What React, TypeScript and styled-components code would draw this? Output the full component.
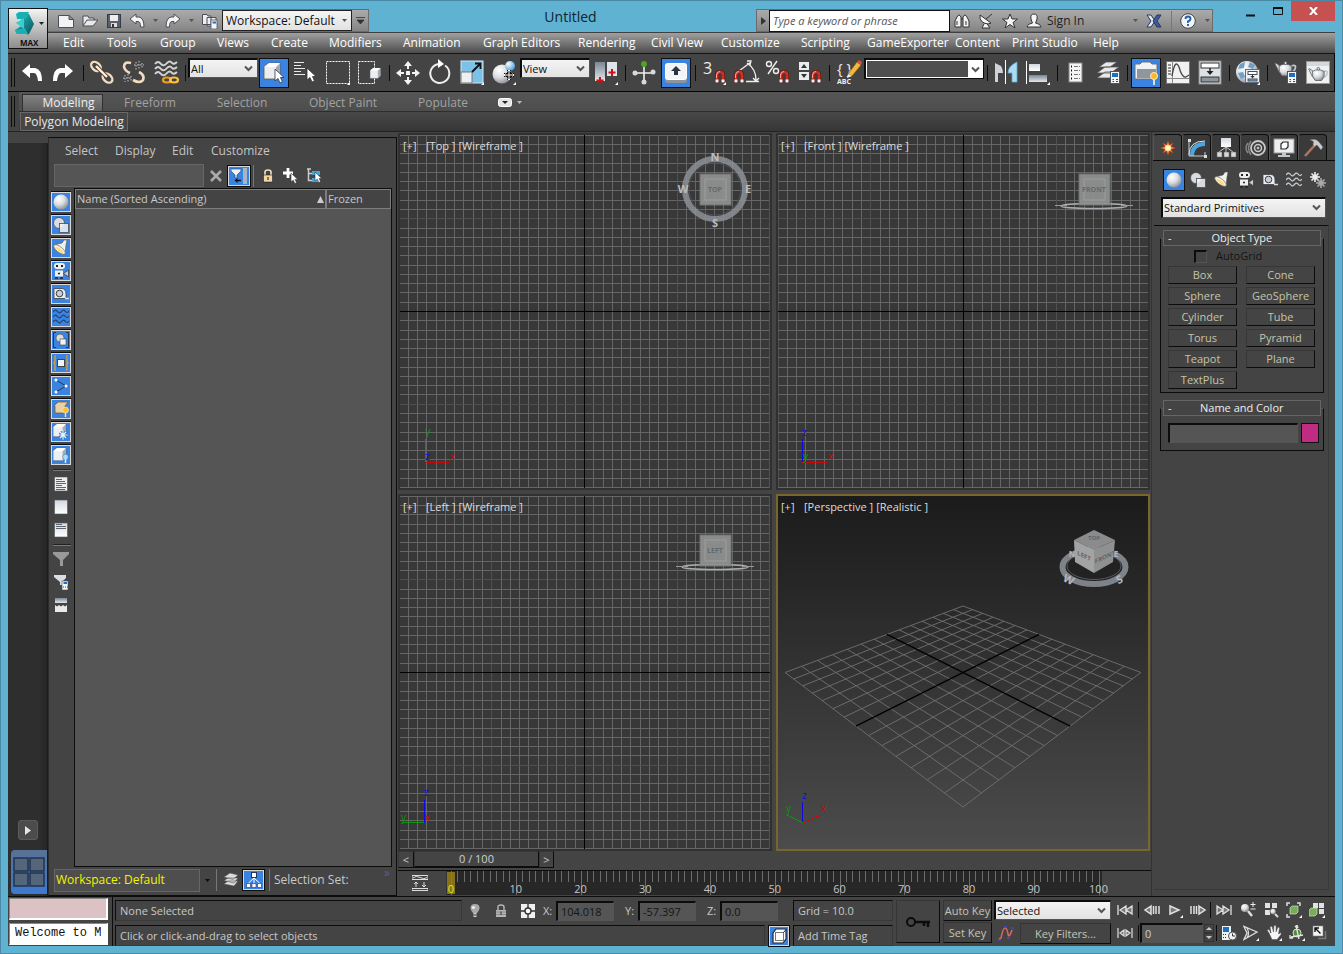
import React, { useState } from 'react';
import styled, { createGlobalStyle, css } from 'styled-components';

const GlobalStyle = createGlobalStyle`
    * { box-sizing:border-box; }
    html, body { margin:0; padding:0; }
    body {
        background:#5fb2d1;
        font-family:"Open Sans","Noto Sans",sans-serif;
        font-size:11px;
        line-height:16px;
        color:#c8c8c8;
    }
    button, input, select { font:inherit; color:inherit; margin:0; border-radius:0; }
    button { padding:0; border:0; background:none; cursor:default; }
    svg { display:block; flex:none; }
`

/* ---------- shared parts ---------- */
const sunken = css`
    border:1px solid #555;
    border-top-color:#0c0c0c;
    border-left-color:#0c0c0c;
`
const raised = css`
    border:1px solid #363636;
    border-right-color:#0c0c0c;
    border-bottom-color:#0c0c0c;
`
const Window = styled.div`
    min-height:100vh;
    display:flex;
    flex-direction:column;
    padding:0 7px 7px;
    background:#5fb2d1;
    border:1px solid #4a8aa4;
`
const Spacer = styled.div<{ $w?: number }>`
    ${p => p.$w ? `width:${p.$w}px; flex:none;` : 'flex:1;'}
`
const VLine = styled.span<{ $w?: number; $h?: number; $light?: boolean }>`
    flex:none;
    width:${p => p.$w || 6}px;
    height:${p => p.$h || 16}px;
    background:linear-gradient(${p => p.$light ? '#777,#777' : '#0c0c0c,#0c0c0c'}) center / 1px 100% no-repeat;
`
const IconButton = styled.button<{ $w?: number; $h?: number }>`
    flex:none;
    width:${p => p.$w || 24}px;
    height:${p => p.$h || 20}px;
    display:flex;
    align-items:center;
    justify-content:center;
`
const DropWrap = styled.div<{ $w?: number; $h?: number }>`
    flex:none;
    display:grid;
    align-items:center;
    ${p => p.$w ? `width:${p.$w}px;` : ''}
    height:${p => p.$h || 20}px;
    > * { grid-area:1/1; }
    > svg { justify-self:end; margin-right:5px; pointer-events:none; }
`
const DropSelect = styled.select`
    appearance:none;
    width:100%;
    height:100%;
    padding:0 18px 0 1px;
    border:1px solid #555;
    border-top:2px solid #0c0c0c;
    border-left:2px solid #0c0c0c;
    background:linear-gradient(#f4f4f4,#e2e2e2);
    color:#111;
    font-size:11px;
`
const Chevron = () => (
    <svg width="9" height="7" viewBox="0 0 9 7"><path d="M1 1.5 L4.5 5 L8 1.5" fill="none" stroke="#555" strokeWidth="2" /></svg>
)
const Drop = ({ label, value, w, h }: { label: string; value: string; w?: number; h?: number }) => (
    <DropWrap $w={w} $h={h}>
        <DropSelect aria-label={label} defaultValue={value}><option>{value}</option></DropSelect>
        <Chevron />
    </DropWrap>
)
const Caret = ({ color = '#555' }: { color?: string }) => (
    <svg width="5" height="3" viewBox="0 0 5 3"><path d="M0 0 H5 L2.5 3 Z" fill={color} /></svg>
)

/* ---------- drawings ---------- */
const Defs = () => (
    <svg width="0" height="0" style={{ position: 'absolute' }} aria-hidden="true">
        <defs>
            <radialGradient id="ball" cx=".35" cy=".3" r=".75"><stop offset="0" stopColor="#fff" /><stop offset=".5" stopColor="#dcdfe2" /><stop offset="1" stopColor="#8b9096" /></radialGradient>
            <radialGradient id="blueBall" cx=".35" cy=".3" r=".75"><stop offset="0" stopColor="#fff" /><stop offset="1" stopColor="#3d9bdc" /></radialGradient>
            <linearGradient id="metal" x2="0" y2="1"><stop offset="0" stopColor="#d3d8de" /><stop offset="1" stopColor="#fff" /></linearGradient>
            <linearGradient id="steel" x2="0" y2="1"><stop offset="0" stopColor="#7b8794" /><stop offset="1" stopColor="#e3e7ec" /></linearGradient>
            <linearGradient id="teal" x2="1" y2="1"><stop offset="0" stopColor="#2bc4c4" /><stop offset="1" stopColor="#07515b" /></linearGradient>
        </defs>
    </svg>
)
const waves32 = [7, 12, 17].map(y => `M5 ${y} q3 -4 6 0 q3 3 6 -1 q3 -3 5 0 q2 2 5 -1`).join(' ')
const waves16 = [3, 8, 13].map(y => `M0 ${y} q2 -3 4 -1 q2 3 4 1 q2 -3 4 -1 q2 3 4 0`).join(' ')
const cursor = (x: number, y: number, s = 1) => (
    <path transform={`translate(${x} ${y}) scale(${s})`} d="M0 0 V12 L3 9.5 L5 14 L7.5 13 L5.500 8.500 H9 Z" fill="#fff" stroke="#333" strokeWidth=".8" />
)
const magnet = (x: number, y: number) => (
    <g transform={`translate(${x} ${y})`}>
        <path d="M2 13 V5.500 Q2 2 5 2 Q8 2 8 5.500 V13" fill="none" stroke="#3a1512" strokeWidth="4.200" />
        <path d="M2 12 V5.500 Q2 2 5 2 Q8 2 8 5.500 V12" fill="none" stroke="#cf2f22" strokeWidth="3" />
        <path d="M2 12.500 V9.500 M8 12.500 V9.500" stroke="#f2f2f2" strokeWidth="3" />
        <path d="M1.500 8 V5 Q2 1.500 5 1.500" fill="none" stroke="#f3a89e" strokeWidth="1" />
    </g>
)
const corner = <path d="M28 25 V28 H25 Z" fill="#fff" />
const cube = (x: number, y: number, s: number) => (
    <g transform={`translate(${x} ${y}) scale(${s})`}>
        <path d="M0 4 L5 0 H16 V12 L12 16 H0 Z" fill="#eceef0" stroke="#555b63" strokeWidth=".8" />
        <path d="M12 16 V4 L16 0 V12 Z" fill="#a5abb3" />
        <path d="M0 4 L5 0 H16 L12 4 Z" fill="#fff" />
    </g>
)
const panelBadge = (x: number, y: number) => (
    <g transform={`translate(${x} ${y})`}>
        <rect x=".5" y=".5" width="9" height="12" fill="#f3f5f7" stroke="#4a5664" />
        <rect x="2" y="2" width="6" height="4" fill="#1f6fc0" />
        <path d="M2.500 8.500 H4 M2.500 10.500 H4 M6 8.500 H8 M6 10.500 H8" stroke="#3c4a58" />
    </g>
)
const teapot = (x: number, y: number, s = 1) => (
    <g transform={`translate(${x} ${y}) scale(${s})`} stroke="#4b5158" strokeWidth=".8">
        <path d="M6 5 Q0 0 1 3 L5 11 L8 12" fill="#d8dbde" />
        <path d="M17 5 Q23 3 21 8 Q20 11 16 12" fill="none" stroke="#c2c6ca" strokeWidth="1.800" />
        <path d="M5 5 Q11 1 18 5 Q19 11 15 15 H8 Q4 11 5 5 Z" fill="url(#ball)" />
        <circle cx="11.500" cy="2" r="1.500" fill="#ddd" />
    </g>
)

// 32px main toolbar drawings
const big: Record<string, React.ReactNode> = {
    undo: <path d="M6 14 L14 7 V11 H19 Q26 12 26 24 H22 Q21 16 18 16 H14 V21 Z" fill="#fff" />,
    redo: <path d="M25 14 L17 7 V11 H12 Q5 12 5 24 H9 Q10 16 13 16 H17 V21 Z" fill="#fff" />,
    link: <g fill="none" stroke="#f3dcc0" strokeWidth="2.400">
        <ellipse cx="10" cy="9.500" rx="5.500" ry="3.800" transform="rotate(42 10 9.500)" />
        <ellipse cx="21.500" cy="21" rx="5.500" ry="3.800" transform="rotate(42 21.500 21)" />
        <path d="M10 9 L21 20" stroke="#4b3a2a" strokeWidth="4" /><path d="M10 9 L21 20" stroke="#fff2e0" />
    </g>,
    unlink: <g fill="none" stroke="#f3dcc0" strokeWidth="2.600">
        <path d="M13 6 Q6 4 6 10 Q7 14 12 16" /><path d="M21 15 Q27 18 25 23 Q22 27 15 23" />
        <path d="M18 5 V13 M21 4 V13 M24 6 V12 M16 8 H26 M7 18 V25 M10 17 V26 M13 19 V25 M5 21 H14" stroke="#999" strokeWidth="1.500" strokeDasharray="1.500 1.500" />
    </g>,
    bind: <g fill="none">
        <path d={waves32} stroke="#d4d4d4" strokeWidth="1.800" />
        <ellipse cx="17" cy="23" rx="4" ry="2.500" stroke="#ef9f1c" strokeWidth="2.200" /><ellipse cx="24" cy="23" rx="4" ry="2.500" stroke="#ffc23a" strokeWidth="2.200" />
    </g>,
    select: <>{cube(6, 6, 1)}{cursor(17, 12, 1)}</>,
    byName: <><path d="M4 5.500 H14 M4 8.500 H11 M4 11.500 H15 M4 14.500 H11 M4 17.500 H15" stroke="#e8e8e8" />{cursor(17, 11)}</>,
    rect: <><rect x="4.500" y="4.500" width="23" height="22" fill="none" stroke="#fff" strokeDasharray="2 1" />{corner}</>,
    windowSel: <><rect x="4.500" y="4.500" width="16" height="22" fill="none" stroke="#fff" strokeDasharray="2 1" />{cube(16, 11, .65)}</>,
    move: <g fill="#f4f4f4"><path d="M16 4 L20 9 H12 Z M16 28 L20 23 H12 Z M4 16 L9 12 V20 Z M28 16 L23 12 V20 Z" /><path d="M15 8 h2 v4 h-2 z M15 20 h2 v4 h-2 z M8 15 h4 v2 h-4 z M20 15 h4 v2 h-4 z" /><rect x="14" y="14" width="4" height="4" /></g>,
    rotate: <><path d="M15 7 A9.500 9.500 0 1 0 21 8.500" fill="none" stroke="#eee" strokeWidth="2" /><path d="M14 2 L20 7 L14 11 Z" fill="#fff" /></>,
    scale: <><rect x="5" y="4" width="22" height="22" fill="#7cc1e6" stroke="#cfeaf7" /><rect x="5" y="15" width="11" height="11" fill="#eef1f3" stroke="#777" /><path d="M16 15 L24 7 M19 6.500 H24.500 V12" stroke="#111" strokeWidth="1.800" fill="none" />{corner}</>,
    place: <><circle cx="14" cy="17" r="9.500" fill="url(#ball)" /><circle cx="22" cy="9" r="5" fill="url(#blueBall)" /><path d="M21 13 V23 M16 18 H26" stroke="#111" strokeWidth="4" /><path d="M21 13 V23 M16 18 H26 M19.500 14.500 L21 13 L22.500 14.500 M19.500 21.500 L21 23 L22.500 21.500 M17.500 16.500 L16 18 L17.500 19.500 M24.500 16.500 L26 18 L24.500 19.500" stroke="#fff" fill="none" />{corner}</>,
    pivot: <><rect x="5" y="5" width="10" height="19" fill="url(#steel)" /><rect x="17" y="5" width="10" height="14" fill="#dfe3ea" /><path d="M10 20 V27 M6.500 23.500 H13.500 M22 12 V19 M18.500 15.500 H25.500" stroke="#d01010" strokeWidth="2" />{corner}</>,
    manip: <><path d="M16 8 V24 M6 16 H26" stroke="#eee" strokeWidth="1.600" /><circle cx="16" cy="7" r="3" fill="#4fa31f" /><circle cx="16" cy="25" r="2.500" fill="#d6dae0" /><circle cx="7" cy="16" r="2.500" fill="#d6dae0" /><circle cx="25" cy="15" r="2.500" fill="#d6dae0" /></>,
    keyboard: <><rect x="5" y="6" width="22" height="20" rx="3" fill="#8c949c" /><rect x="5.500" y="6.500" width="21" height="16" rx="2" fill="#f3f4f6" stroke="#fff" /><path d="M16 9 L21 14 H18 V18 H14 V14 H11 Z" fill="#2b3440" /></>,
    snap3: <><text x="5" y="17" fontSize="16" fill="#eee">3</text>{magnet(17, 13)}{corner}</>,
    snapAngle: <><path d="M9 14 L21 5 M17 6 Q26 12 26 23 M16 24.500 H29 M17 4 L21 4 L20 8 M23 21 L26 24 L29 21" stroke="#eee" strokeWidth="1.300" fill="none" />{magnet(4, 13)}</>,
    snapPct: <><circle cx="7" cy="7" r="2.500" fill="none" stroke="#eee" strokeWidth="1.400" /><circle cx="14" cy="14" r="2.500" fill="none" stroke="#eee" strokeWidth="1.400" /><path d="M15 4 L6 17" stroke="#eee" strokeWidth="1.400" />{magnet(17, 13)}</>,
    snapSpin: <><rect x="5" y="5" width="10" height="8" fill="#e9ecef" /><rect x="5" y="15" width="10" height="8" fill="#e9ecef" /><path d="M7 11 L10 7 L13 11 Z M7 17 L10 21 L13 17 Z" fill="#333" />{magnet(17, 13)}</>,
    named: <><text x="5" y="17" fontSize="15" fill="#eee">{'{ }'}</text><path d="M16 17 L25 5 L29 8 L20 19 Z" fill="#f5b93a" stroke="#7a5712" strokeWidth=".6" /><path d="M25 5 L29 8 L30 5 L27 3 Z" fill="#d8503c" /><path d="M16 17 L20 19 L15 21 Z" fill="#eee" /><text x="5" y="27" fontSize="7" fontWeight="700" fill="#eee">ABC</text></>,
    mirror: <><path d="M5 6 L11 9 Q13 12 13 16 H8 V25 H5 Z" fill="#cfd3d9" /><path d="M15.500 3 V27" stroke="#fff" /><path d="M27 5 V25 H22 V16 H18 Q18 9 27 5 Z" fill="#aadcf2" stroke="#5fa9cc" strokeWidth=".8" /></>,
    align: <><path d="M4.500 4 V27" stroke="#fff" /><rect x="7" y="7" width="11" height="7" fill="url(#metal)" /><rect x="7" y="18" width="18" height="7" fill="url(#steel)" />{corner}</>,
    layerDoc: <><rect x="9" y="6" width="13" height="19" fill="#f4f4f4" stroke="#888" /><path d="M14 9.500 H20 M14 13.500 H20 M14 17.500 H20 M14 21.500 H20" stroke="#777" strokeDasharray="4 1" /><path d="M11 9.500 h1 M11 13.500 h1 M11 17.500 h1 M11 21.500 h1" stroke="#111" strokeWidth="2" /></>,
    layers: <><path d="M5 21 L13 15 H27 L19 21 Z M5 16 L13 10 H27 L19 16 Z M7 10 L14 5 H25 L18 10 Z" fill="#e6e8ea" stroke="#555" strokeWidth=".8" />{panelBadge(18, 14)}</>,
    ribbon: <><path d="M5 7 H10 L12 5 H20 L22 7 H27 V22 H5 Z" fill="#f2f3f5" stroke="#6b7077" /><rect x="7" y="12" width="19" height="9" fill="#8f969e" /><circle cx="24" cy="19" r="3.500" fill="#ffb728" stroke="#fff2b0" /><path d="M24 23 V28" stroke="#ddd" strokeWidth="2" /></>,
    curve: <><rect x="4.500" y="4.500" width="23" height="22" fill="#f1f1f1" stroke="#777" /><path d="M10.500 4 V26 M5 21.500 H27" stroke="#888" /><path d="M6 8 H9 M6 11 H9 M6 14 H9 M6 17 H9" stroke="#333" /><path d="M10 19 Q13 1 17 10 Q20 21 24 20 L27 18" fill="none" stroke="#444" strokeWidth="1.300" /></>,
    schematic: <><rect x="5" y="4" width="22" height="23" fill="#dfe2e5" stroke="#888" /><rect x="7" y="6" width="18" height="5" fill="#fff" stroke="#333" /><rect x="7" y="20" width="18" height="5" fill="#8c949c" stroke="#333" /><path d="M16 11 V15" stroke="#222" strokeWidth="1.500" /><path d="M12.500 14 H19.500 L16 18 Z" fill="#222" /></>,
    material: <><circle cx="15" cy="15" r="11" fill="url(#ball)" /><path d="M8 7 L13 5 L12 11 L6 12 Z M18 5 L23 8 L21 12 L16 10 Z M6 16 L11 15 L13 20 L9 22 Z M24 13 L26 16 L22 17 Z" fill="#6d9fc8" /><rect x="13.500" y="12.500" width="14" height="13" fill="#eef1f4" stroke="#5a6e84" /><rect x="16" y="14.500" width="9" height="3" fill="#fff" stroke="#44525f" /><rect x="16" y="22" width="9" height="2" fill="#8fa3b8" stroke="#44525f" /><path d="M20.500 17 V20" stroke="#333" /><path d="M18.500 19 H22.500 L20.500 21.500 Z" fill="#333" />{corner}</>,
    renderSetup: <>{teapot(4, 4, 1)}{panelBadge(17, 14)}</>,
    frame: <><rect x="4.500" y="4.500" width="23" height="22" fill="#f0f1f1" stroke="#999" /><rect x="5" y="5" width="22" height="4" fill="#d5d8da" />{teapot(6, 10, .9)}</>,
}

// 16px drawings, shared by the explorer filters and the create panel
const small: Record<string, React.ReactNode> = {
    sphere: <circle cx="8" cy="8" r="7.500" fill="url(#ball)" />,
    shapes: <><circle cx="6" cy="6" r="5.500" fill="#d9dde1" stroke="#484d53" strokeWidth=".8" /><rect x="6.500" y="6.500" width="9" height="9" fill="#f2f3f4" fillOpacity=".85" stroke="#484d53" strokeWidth=".8" /></>,
    light: <><path d="M9 3 L11 0 L14 0 L13 5 L12 14 L1 5 Z" fill="#f0f0ec" stroke="#555" strokeWidth=".6" /><ellipse cx="6.500" cy="9.500" rx="7" ry="2.800" transform="rotate(38 6.500 9.500)" fill="#f6f1dc" stroke="#666" strokeWidth=".6" /><ellipse cx="6.500" cy="10" rx="4.500" ry="1.300" transform="rotate(38 6.500 10)" fill="#ffdc6a" /></>,
    camera: <><rect x="1" y="0" width="11" height="6" rx="3" fill="#eceef0" /><path d="M3 3 H5 M8 3 H10" stroke="#222" strokeWidth="2" /><rect x="2" y="7.500" width="8" height="6" fill="#eceef0" /><path d="M10.500 10.500 L15.500 7 V14 Z" fill="#c5c9ce" stroke="#333" strokeWidth=".7" /><path d="M5 10.500 H7 M2 15 H5 M7 15 H10" stroke="#222" strokeWidth="1.400" /></>,
    tape: <><path d="M1 2.500 H9 Q13 3 13 8 V12.500 H1 Z" fill="#e9ebee" stroke="#3c4147" strokeWidth=".8" /><circle cx="6.500" cy="7.500" r="3.300" fill="#c9ced4" stroke="#3c4147" /><path d="M12 12.500 H16" stroke="#ddd" strokeWidth="1.500" /></>,
    wavesDark: <path d={waves16} fill="none" stroke="#24426e" strokeWidth="1.200" />,
    wavesLight: <path d={waves16} fill="none" stroke="#c4cacf" strokeWidth="1.300" />,
    group: <><path d="M3 .5 H.5 V15.500 H3 M13 .5 H15.500 V15.500 H13" fill="none" stroke="#26364d" /><circle cx="7" cy="6" r="4" fill="#d9dde1" stroke="#444" strokeWidth=".6" /><rect x="7" y="7" width="6" height="6" fill="#f2f3f4" stroke="#444" strokeWidth=".6" /></>,
    xref: <><path d="M3 1 H2 V7 L1 8 L2 9 V15 H3 M13 1 H14 V7 L15 8 L14 9 V15 H13" fill="none" stroke="#f0a21e" strokeWidth="1.200" /><rect x="4.500" y="4.500" width="7" height="7" fill="#f2f3f4" stroke="#444" /></>,
    bone: <><path d="M3 2 L13 8 L3 14" fill="none" stroke="#26364d" /><circle cx="3" cy="2" r="1.500" fill="#fff" /><circle cx="13" cy="8" r="1.500" fill="#fff" /><circle cx="3" cy="14" r="1.500" fill="#fff" /></>,
    container: <><path d="M1 5 L5 1 H15 L12 5 V12 H2 V5 Z" fill="#e9cfa4" stroke="#7a5c33" strokeWidth=".8" /><circle cx="12.500" cy="9" r="3" fill="#ffbe2e" stroke="#fff3bb" strokeWidth=".6" /><path d="M12.500 12 V16" stroke="#ddd" strokeWidth="1.500" /></>,
    frozen: <>{cube(0, 0, .8)}<circle cx="10" cy="11" r="4" fill="#2f6db8" /><path d="M10 6.500 V15.500 M5.500 11 H14.500 M7 8 L13 14 M13 8 L7 14" stroke="#e9f7ff" strokeWidth="1.200" /></>,
    hidden: <>{cube(0, 1, .8)}<circle cx="12.500" cy="10" r="2.800" fill="#a9dcfa" stroke="#3b83c0" strokeWidth=".6" /><path d="M12.500 12 V16" stroke="#eee" strokeWidth="1.500" /></>,
    docFull: <><rect x="1.500" y="1" width="13" height="14" fill="#eceeef" stroke="#4d535e" strokeWidth=".6" /><path d="M3 3.500 H9 M3 5.500 H12 M3 7.500 H13 M3 9.500 H9 M3 11.500 H13 M3 13.500 H12" stroke="#5f6570" /></>,
    docEmpty: <rect x="1.500" y="1" width="13" height="14" fill="url(#metal)" stroke="#4d535e" strokeWidth=".6" />,
    docHalf: <><rect x="1.500" y="1" width="13" height="14" fill="url(#metal)" stroke="#4d535e" strokeWidth=".6" /><path d="M3 2.500 H9 M3 4.500 H13 M3 6.500 H13" stroke="#5f6570" /></>,
    funnel: <path d="M0 1 H16 V3 L10 9 V15 H7 V9 L0 3 Z" fill="#999" />,
    funnelSet: <><path d="M1 1 H13 V4 L9 8 V11 H7 V8 L1 3 Z" fill="#d9dde1" /><rect x="9" y="7" width="6" height="9" fill="#f4f5f6" stroke="#4a5664" strokeWidth=".6" /><rect x="10.500" y="8" width="3.500" height="2" fill="#1f6fc0" /><path d="M10 13 H15" stroke="#444" strokeDasharray="1 1" /></>,
    torn: <><rect x="2" y="1" width="12" height="5" fill="url(#steel)" /><path d="M2 8 L4 9.500 L6 8 L8 9.500 L10 8 L12 9.500 L14 8 V15 H2 Z" fill="#e8eaec" /></>,
    system: <><path d="M5 0 V10 M0 5 H10 M1.500 1.500 L8.500 8.500 M8.500 1.500 L1.500 8.500" stroke="#eee" strokeWidth="1.600" /><circle cx="5" cy="5" r="2.500" fill="#eee" /><path d="M11 6 V16 M6 11 H16 M7.500 7.500 L14.500 14.500 M14.500 7.500 L7.500 14.500" stroke="#a9a9a9" strokeWidth="1.600" /><circle cx="11" cy="11" r="2.500" fill="#a9a9a9" /></>,
    bulb: <><path d="M8 1 Q13 1 12.500 5.500 Q12 8 10 10 H6 Q4 8 3.500 5.500 Q3 1 8 1 Z" fill="#a9a9a9" /><circle cx="6.500" cy="4.500" r="1.600" fill="#eee" /><path d="M6.500 10 H9.500 V14 H6.500 Z" fill="#d0d0d0" /><path d="M6.500 12 H9.500" stroke="#333" /></>,
    lockGrey: <><path d="M5 7 V4 Q5 2 8 2 Q11 2 11 4 V7" fill="none" stroke="#b9b9b9" strokeWidth="1.400" /><rect x="3" y="7" width="10" height="7" fill="#b4b4b4" /><path d="M3 9 H13 M3 11.500 H13" stroke="#8a8a8a" /><path d="M8 8.500 V12" stroke="#333" /></>,
    lockGold: <><path d="M5 7 V4 Q5 2 8 2 Q11 2 11 4 V7" fill="none" stroke="#f1dfc2" strokeWidth="1.600" /><rect x="3.500" y="7" width="9" height="7" fill="#f3d6a4" stroke="#111" strokeWidth=".5" /><path d="M8 9 V12" stroke="#111" /></>,
    absMode: <><rect x="1" y="1" width="14" height="14" fill="#eef1f3" /><circle cx="8" cy="8" r="3" fill="#fff" stroke="#333" strokeWidth="1.400" /><path d="M8 1 V5 M8 11 V15 M1 8 H5 M11 8 H15" stroke="#333" strokeWidth="1.400" /></>,
    isolate: <><path d="M2 5 L5 1 H15 V11 L12 15 H2 Z" fill="#fff" stroke="#223" strokeWidth="1.200" /><rect x="4.500" y="4.500" width="8" height="8" fill="#fff" stroke="#777" /><path d="M12.500 4.500 L15 1.500" stroke="#223" /></>,
    cross: <path d="M3 3 L13 13 M13 3 L3 13" stroke="#aaa" strokeWidth="2.600" />,
    filterOn: <><path d="M0 1 H10 V3 L6 7 V10 H4 V7 L0 3 Z" fill="#eef2f6" stroke="#26364d" strokeWidth=".6" /><rect x="12" y="0" width="4" height="16" fill="#a9b4c2" /><path d="M10 12.500 H6" stroke="#111" strokeWidth="1.500" /><path d="M6.500 10 L3.500 12.500 L6.500 15 Z" fill="#111" /></>,
    addSel: <><path d="M5 0 V10 M0 5 H10" stroke="#fff" strokeWidth="2.800" />{cursor(8, 5, .75)}</>,
    treeSel: <><path d="M1 1 H5 M2.500 1 V12.500 H7 M2.500 5.500 H7" stroke="#ccc" fill="none" strokeWidth="1.500" /><rect x="6" y="3" width="8" height="4" fill="#45a5d9" /><rect x="6" y="10" width="8" height="4" fill="#45a5d9" />{cursor(9, 4, .75)}</>,
    stack: <path d="M1 12 L5 9 H15 L11 14 Z M1 8.500 L5 6 H15 L11 11 Z M1 5 L7 1 L15 3 L10 7.500 Z" fill="#ddd" stroke="#555" strokeWidth=".6" />,
    tree: <><rect x="5.500" y=".5" width="5" height="5" fill="#fff" stroke="#26364d" /><path d="M8 6 V11 M8 6 L2.500 11 M8 6 L13.500 11" stroke="#fff" /><path d="M.5 11.500 h4 v4 h-4 z M6 11.500 h4 v4 h-4 z M11.500 11.500 h4 v4 h-4 z" fill="#fff" stroke="#26364d" strokeWidth=".6" /></>,
    newFile: <path d="M.5 2.500 H11 L15.500 6.500 V14.500 H.5 Z M11 2.500 V6.500 H15.500" fill="#f2f3f5" stroke="#4a4f58" />,
    openFile: <path d="M1 13 V3 H6 L7 5 H12 V7 M1 13 L5 7 H16 L11 13 Z" fill="#e9e9e9" stroke="#4a4f58" />,
    save: <><rect x="1.500" y="1.500" width="13" height="13" fill="#59606b" stroke="#333b46" /><rect x="4" y="2" width="8" height="6" fill="#eee" /><rect x="5" y="10" width="6" height="4" fill="#ddd" /><rect x="6" y="11" width="2" height="3" fill="#333" /></>,
    undoS: <path d="M1 6 L7 1 V4 H10 Q15 5 15 14 H11.500 Q11.500 8.500 9 8.500 H7 V11 Z" fill="#f4f4f4" stroke="#4a4f58" />,
    redoS: <path d="M15 6 L9 1 V4 H6 Q1 5 1 14 H4.500 Q4.500 8.500 7 8.500 H9 V11 Z" fill="#f4f4f4" stroke="#4a4f58" />,
    project: <><path d="M.5 11.500 V1.500 H5 L6 3 H9 V11.500 Z M5 4.500 H14 V13 H5 Z" fill="#eee" stroke="#4a4f58" /><rect x="9" y="7" width="6" height="9" fill="#f4f5f6" stroke="#4a5664" strokeWidth=".8" /><rect x="10.500" y="8.500" width="3.500" height="2" fill="#1f6fc0" /></>,
    binoc: <g fill="#f2f2f2" stroke="#333"><path d="M3 4 Q5 0 7 4 V14 H1 V8 Z M13 4 Q11 0 9 4 V14 H15 V8 Z" /><path d="M7 6 H9 M3 8 V12 M12 8 V12" /></g>,
    dish: <g fill="#f4f4f4" stroke="#333"><path d="M2 2 Q1 10 10 11 L13 10 Z" /><path d="M8 6 L14 1 M6 11 L4 15 H12 L9 11" /></g>,
    star: <path d="M8 1 L10 6 H15.500 L11 9.500 L13 15 L8 11.500 L3 15 L5 9.500 L.5 6 H6 Z" fill="#f6f6f6" stroke="#333" />,
    user: <path d="M8 1 Q12 1 11 6 Q10 9 9.500 10 Q15 11 15 14 H1 Q1 11 6.500 10 Q6 9 5 6 Q4 1 8 1 Z" fill="#f6f6f6" stroke="#333" />,
    exchange: <><path d="M1 2 H5 L9 8 L5 14 H1 L5 8 Z" fill="#e3eaf5" stroke="#27365c" /><path d="M15 2 H11 L7 8 L11 14 H15 L11 8 Z" fill="#3c5c9e" stroke="#27365c" /></>,
    help: <><circle cx="8" cy="8" r="7.300" fill="#f2f5f8" stroke="#444" /><path d="M5.500 6 Q5.500 3.500 8 3.500 Q10.500 3.500 10.500 6 Q10.500 7.500 8 8.500 V10 M8 11 V13" stroke="#2a5fa8" strokeWidth="1.900" fill="none" /></>,
    trackView: <><path d="M0 .5 H16 V4.500 H0 Z M0 13.500 H16 V15.500 H0 Z" fill="none" stroke="#ddd" /><path d="M1 3 Q4 0 8 2.500 T15 2.500" fill="none" stroke="#ddd" /><path d="M4 12 V7 M2 9 L4 7 L6 9 M12 7 V12 M10 10 L12 12 L14 10" fill="none" stroke="#ddd" /></>,
    toStart: <path d="M1 3 V13 M9 4 L3 8 L9 12 Z M15 4 L9 8 L15 12 Z" fill="#777" stroke="#e0e0e0" strokeWidth="1.300" />,
    prev: <path d="M7 4 L1 8 L7 12 Z M9.500 4 V12 M12 4 V12 M15 4 V12" fill="#777" stroke="#e0e0e0" strokeWidth="1.500" />,
    play: <><path d="M3 4 L12 8 L3 12 Z" fill="#777" stroke="#e0e0e0" strokeWidth="1.500" /><path d="M16 13 V16 H13 Z" fill="#fff" /></>,
    next: <path d="M9 4 L15 8 L9 12 Z M1 4 V12 M4 4 V12 M6.500 4 V12" fill="#777" stroke="#e0e0e0" strokeWidth="1.500" />,
    toEnd: <path d="M15 3 V13 M7 4 L13 8 L7 12 Z M1 4 L7 8 L1 12 Z" fill="#777" stroke="#e0e0e0" strokeWidth="1.300" />,
    keyMode: <path d="M1 3 V13 M15 3 V13 M7 5 L3 8 L7 11 Z M9 5 L13 8 L9 11 Z" fill="#777" stroke="#e0e0e0" strokeWidth="1.200" />,
    zoom: <><circle cx="5" cy="6" r="4" fill="url(#ball)" /><path d="M8 9 L12 14" stroke="#ddd" strokeWidth="2.500" /><path d="M13 0 V5 M10.500 2.500 H15.500 M10.500 7 H15.500" stroke="#eee" /></>,
    zoomAll: <><path d="M2 1 h5 v5 h-5 z M9 1 h5 v5 h-5 z M2 8 h5 v5 h-5 z" fill="#e0e3e6" /><circle cx="10" cy="9.500" r="3" fill="url(#ball)" stroke="#444" strokeWidth=".6" /><path d="M12 12 L15 15" stroke="#ddd" strokeWidth="2" /></>,
    extents: <><path d="M4 1 H1 V4 M11 1 H14 V4 M4 15 H1 V12" fill="none" stroke="#ddd" strokeWidth="1.500" /><path d="M4 6 L6 4 H12 V10 L10 12 H4 Z" fill="#78ad5b" stroke="#c9e5b5" strokeWidth=".7" /><path d="M16 13 V16 H13 Z" fill="#fff" /></>,
    extentsAll: <><path d="M4 1 h5 v5 h-5 z M10 1 h5 v5 h-5 z M10 7 h5 v5 h-5 z" fill="#e0e3e6" /><path d="M0 8 L2 6 H8 V12 L6 14 H0 Z" fill="#78ad5b" stroke="#c9e5b5" strokeWidth=".7" /><path d="M16 13 V16 H13 Z" fill="#fff" /></>,
    timeConf: <><rect x="1" y="1" width="9" height="14" fill="#eef1f3" /><rect x="2" y="2" width="6" height="5" fill="#1f6fc0" /><path d="M2 9.500 H5 M2 12.500 H5" stroke="#333" strokeDasharray="1 1" /><circle cx="11.500" cy="11" r="4" fill="#f4f4f4" stroke="#555" /><path d="M11.500 8.500 V11 H14" fill="none" stroke="#333" /></>,
    fov: <><path d="M14 7 L1 1.500 L4 8 L1 14.500 Z M4 3 Q7 8 4 13" fill="none" stroke="#ddd" strokeWidth="1.300" /><path d="M16 13 V16 H13 Z" fill="#fff" /></>,
    pan: <><path d="M3 8 L1 5 L3 4.500 L5 8 L4 1.500 L6 1.500 L7.500 7 L8 .5 H10 L10 7 L12 2 L13.500 3 L12.500 9 L15 7.500 L15 9.500 L11 14.500 H6 Z" fill="#f6f6f6" stroke="#555" strokeWidth=".5" /><path d="M16 13 V16 H13 Z" fill="#fff" /></>,
    orbit: <><circle cx="8" cy="8" r="4" fill="#4d8a37" stroke="#ddd" /><path d="M2 12 L14 10 M7 1 L10 14 M6 2 L8 0 L9 3 M1 10 L1 13 L4 13" fill="none" stroke="#e5e5e5" strokeWidth="1.300" /><path d="M16 13 V16 H13 Z" fill="#fff" /></>,
    maximize: <><rect x="1" y="1" width="10" height="10" fill="#f4f4f4" stroke="#888" strokeWidth=".6" /><path d="M3.500 3.500 L8.500 8.500 M3 7 V3 H7" fill="none" stroke="#111" strokeWidth="1.400" /><path d="M6 13.500 H13.500 V6" fill="none" stroke="#777" strokeWidth="1.500" /></>,
    curveKey: <><path d="M1 14 L3 13 Q5 3 7 3 Q9 3 10 9 Q11 14 14 5" fill="none" stroke="#d9695f" strokeWidth="1.500" /><path d="M0 15 h3 M6 2 h3 M13 3 h3 M9 13 h3" stroke="#3a4fd0" strokeWidth="1.500" /></>,
}

// 24px tab drawings of the command panel
const tabArt: Record<string, React.ReactNode> = {
    create: <><path d="M12 5 L13.500 9 L17 7 L15 10.500 L19 12 L15 13.500 L17 17 L13.500 15 L12 19 L10.500 15 L7 17 L9 13.500 L5 12 L9 10.500 L7 7 L10.500 9 Z" fill="#ffa437" stroke="#b5432a" strokeWidth=".8" /><circle cx="12" cy="12" r="2.800" fill="#fff7cf" /></>,
    modify: <><path d="M4 19 Q4 5 20 5" fill="none" stroke="#d6e9f8" strokeWidth="1" /><path d="M7 20 Q7 8 20 8" fill="none" stroke="#4ea4dd" strokeWidth="4" /><path d="M4 4 V20 H20 V16 M4 4 h2" fill="none" stroke="#ccc" /><path d="M3 3 h3 v3 h-3 z M19 19 h3 v3 h-3 z" fill="#ddd" /></>,
    hierarchy: <><rect x="7" y="2" width="10" height="9" fill="url(#metal)" /><path d="M12 11 V16 M12 11 L5 16 M12 11 L19 16" stroke="#ccc" /><path d="M3 16 h5 v5 h-5 z M10 16 h5 v5 h-5 z M17 16 h5 v5 h-5 z" fill="#d8d8d8" stroke="#666" strokeWidth=".5" /></>,
    motion: <g fill="none" stroke="#c9c9c9"><circle cx="15" cy="12" r="7" strokeWidth="1.800" /><circle cx="15" cy="12" r="3.500" strokeWidth="1.600" /><circle cx="15" cy="12" r="1" fill="#ccc" /><path d="M8 5 Q3 12 8 19 M5 7 Q1 12 5 17" stroke="#888" strokeWidth="1.400" /></g>,
    display: <><rect x="2" y="3" width="20" height="14" fill="#eceef0" stroke="#999" /><path d="M9 8 L11 6 H16 V11 L14 13 H9 Z" fill="#fff" stroke="#222" strokeWidth="1.200" /><path d="M10 17 H14 V19 H18 V21 H6 V19 H10 Z" fill="#c3c6c9" /></>,
    utils: <><path d="M4 20 L14 9" stroke="#b8735c" strokeWidth="2.500" /><path d="M9 4 Q15 2 18 6 L22 11 L20 14 L16 9 L13 11 L12 8 Q14 5 9 4 Z" fill="#c9ccd0" stroke="#666" strokeWidth=".5" /></>,
}
const Big = ({ name }: { name: string }) => <svg width="32" height="32" viewBox="0 0 32 32" aria-hidden="true">{big[name]}</svg>
const Small = ({ name }: { name: string }) => <svg width="16" height="16" viewBox="0 0 16 16" aria-hidden="true">{small[name]}</svg>

/* ---------- title bar + menu ---------- */
const Header = styled.header`
    display:grid;
    grid-template-columns:40px 1fr;
    grid-template-rows:31px 21px;
`
const AppButton = styled.button`
    grid-area:1/1/3/2;
    z-index:1;
    align-self:start;
    margin-top:7px;
    height:41px;
    display:grid;
    grid-template-columns:30px 1fr;
    grid-template-rows:29px 10px;
    align-items:center;
    background:linear-gradient(#f4f4f4,#8d8d8d);
    border:1px solid #111;
    color:#111;
    font-size:8px;
    font-weight:700;
    line-height:10px;
    text-align:left;
    > span { grid-column:1/3; padding-left:11px; }
`
const TitleRow = styled.div`
    grid-area:1/2;
    display:flex;
    min-width:0;
`
const QuickBar = styled.div`
    height:23px;
    margin-top:8px;
    display:flex;
    align-items:center;
    padding-left:6px;
    background:linear-gradient(#ababab,#858585);
    border:1px solid #6b6b6b;
    border-left:0;
    color:#222;
    font-size:12px;
`
const WorkspaceSelect = styled(DropSelect)`
    border:1px solid #222;
    padding:0 10px 0 3px;
    font-size:12px;
`
const QuickEnd = styled.button`
    width:16px;
    height:21px;
    display:grid;
    place-items:center;
`
const Title = styled.h1`
    flex:1;
    margin:0;
    padding:6px 0 0 16px;
    text-align:center;
    font-size:14px;
    font-weight:400;
    line-height:20px;
    color:#14232b;
`
const HelpBar = styled(QuickBar)`
    padding-left:0;
    border-left:1px solid #6b6b6b;
`
const SearchInput = styled.input`
    width:181px;
    height:22px;
    padding:0 3px;
    border:1px solid #111;
    background:#fff;
    font-style:italic;
    font-size:11px;
    &::placeholder { color:#555; opacity:1; }
`
const SignIn = styled.button`
    width:84px;
    padding-left:1px;
    text-align:left;
    font-size:12px;
`
const WinButtons = styled.div`
    display:flex;
    margin-left:24px;
`
const WinButton = styled.button<{ $close?: boolean }>`
    width:${p => p.$close ? 44 : 27}px;
    height:20px;
    display:grid;
    place-items:center;
    background:${p => p.$close ? '#c75050' : 'none'};
`
const Menu = styled.nav`
    grid-area:2/1/3/3;
    display:flex;
    padding-left:55px;
    background:linear-gradient(#a0a0a0,#4c4c4c);
    border-top:1px solid #3f3f3f;
    overflow:hidden;
`
const MenuButton = styled.button<{ $w: number }>`
    width:${p => p.$w}px;
    height:20px;
    flex:none;
    color:#fff;
    font-size:12px;
    text-align:left;
    white-space:nowrap;
`
const menus: [string, number][] = [['Edit', 44], ['Tools', 53], ['Group', 57], ['Views', 54], ['Create', 58], ['Modifiers', 74], ['Animation', 80], ['Graph Editors', 95], ['Rendering', 73], ['Civil View', 70], ['Customize', 80], ['Scripting', 66], ['GameExporter', 88], ['Content', 57], ['Print Studio', 81], ['Help', 40]]

/* ---------- main toolbar + ribbon ---------- */
const Handle = styled.div`
    width:8px;
    flex:none;
    align-self:stretch;
    margin:4px 0;
    background:linear-gradient(#0c0c0c,#0c0c0c) 3px 0 / 1px 100% no-repeat, linear-gradient(#0c0c0c,#0c0c0c) 6px 0 / 1px 100% no-repeat;
`
const Toolbar = styled.div`
    height:39px;
    display:flex;
    align-items:center;
    background:#444;
    border-top:1px solid #141414;
    border-bottom:1px solid #080808;
    border-right:1px solid #080808;
    overflow:hidden;
`
const Tool = styled.button<{ $on?: boolean }>`
    flex:none;
    width:32px;
    height:32px;
    overflow:hidden;
    ${p => p.$on && css`
        background:linear-gradient(#3b83e0,#3b83e0) center / 28px 28px no-repeat, linear-gradient(#101010,#101010) center / 30px 30px no-repeat;
    `}
`
const ToolDrop = styled.div`
    flex:none;
    width:70px;
    align-self:flex-start;
    padding-top:4px;
`
const NamedBox = styled.div`
    flex:none;
    width:120px;
    height:21px;
    align-self:flex-start;
    margin-top:4px;
    padding:0 1px;
    display:flex;
    border:1px solid #0c0c0c;
    border-width:2px 1px 1px 2px;
    background:#fff;
`
const NamedInput = styled.input`
    flex:1;
    min-width:0;
    margin:1px 0;
    border:0;
    background:#4f4f4f;
`
const Ribbon = styled.div`
    height:40px;
    display:flex;
    background:#444;
    border-bottom:1px solid #222;
`
const RibbonBody = styled.div`
    flex:1;
    min-width:0;
    margin-left:3px;
`
const RibbonTabs = styled.div`
    height:20px;
    display:flex;
    align-items:flex-end;
    padding-left:3px;
    background:linear-gradient(#565656,#4d4d4d);
    border-bottom:1px solid #2e2e2e;
`
const RibbonTab = styled.button<{ $w: number; $on?: boolean }>`
    width:${p => p.$w}px;
    height:17px;
    flex:none;
    font-size:12px;
    line-height:16px;
    color:${p => p.$on ? '#eee' : '#a2a2a2'};
    text-align:center;
    ${p => p.$on && css`
        padding-left:12px;
        background:linear-gradient(#828282,#5f5f5f);
        border:1px solid #303030;
        border-bottom:0;
    `}
`
const RibbonPanels = styled.div`
    height:19px;
    padding-left:1px;
    background:linear-gradient(#484848,#363636);
`
const PanelButton = styled.button`
    width:108px;
    height:19px;
    font-size:12px;
    line-height:16px;
    color:#e6e6e6;
    background:#464646;
    border:1px solid #686868;
`
const toolRow = ['undo', 'redo', '|', 'link', 'unlink', 'bind', '|', 'All', 'select*', 'byName', 'rect', 'windowSel', '|', 'move', 'rotate', 'scale', 'place', 'View', 'pivot', '|', 'manip', 'keyboard*', '|', 'snap3', 'snapAngle', 'snapPct', 'snapSpin', '|', 'named', '[]', '|', 'mirror', 'align', '|', 'layerDoc', 'layers', '|', 'ribbon*', 'curve', 'schematic', '|', 'material', '|', 'renderSetup', 'frame']

/* ---------- workspace ---------- */
const Main = styled.main`
    flex:1;
    display:grid;
    grid-template-columns:40px 350px minmax(0,1fr) 184px;
    background:#444;
    min-height:0;
`
const LayoutStrip = styled.aside`
    display:flex;
    flex-direction:column;
    justify-content:flex-end;
    align-items:center;
    gap:10px;
    padding-bottom:2px;
    margin-top:11px;
    background:linear-gradient(90deg,#2e2e2e 80%,#262626);
    border-right:1px solid #1c1c1c;
`
const StripArrow = styled.button`
    width:20px;
    height:20px;
    display:grid;
    place-items:center;
    background:#4c4c4c;
    border:1px solid #5c5c5c;
    border-radius:3px;
`
const StripLayout = styled.button`
    width:36px;
    height:44px;
    display:grid;
    place-items:center;
    align-self:flex-end;
    border-radius:4px 0 0 4px;
    background:linear-gradient(#5a7194,#3c7ad0);
`
const Explorer = styled.section`
    display:flex;
    flex-direction:column;
    margin-top:5px;
    padding:0 4px 0 2px;
    border:1px solid #0c0c0c;
    border-left:1px solid #2c2c2c;
    margin-right:1px;
    min-width:0;
`
const ExplorerMenu = styled.nav`
    height:25px;
    display:flex;
    align-items:center;
    padding-left:14px;
`
const ExplorerMenuButton = styled.button<{ $w: number }>`
    width:${p => p.$w}px;
    text-align:left;
    font-size:12px;
    color:#c4c4c4;
`
const ExplorerTools = styled.div`
    height:25px;
    display:flex;
    align-items:center;
    padding-left:3px;
`
const FindInput = styled.input`
    width:150px;
    height:23px;
    background:#555;
    border:1px solid #666;
`
const Lit = styled.button<{ $w?: number }>`
    flex:none;
    width:${p => p.$w || 21}px;
    height:20px;
    display:grid;
    place-items:center;
    background:#3b83e0;
    border:1px solid #d8d8d8;
    outline:1px solid #0c0c0c;
`
const ExplorerBody = styled.div`
    flex:1;
    display:flex;
    min-height:0;
`
const Filters = styled.div`
    width:23px;
    flex:none;
    display:flex;
    flex-direction:column;
    align-items:flex-start;
    padding-top:4px;
    gap:3px;
    > hr { width:18px; height:2px; margin:1px 0 0 2px; border:0; border-top:1px solid #222; border-bottom:1px solid #777; }
`
const FilterLit = styled(Lit)`
    width:20px;
    outline:0;
    box-shadow:0 -1px 0 #0c0c0c;
`
const ListArea = styled.div`
    flex:1;
    border:1px solid #0c0c0c;
    background:#555;
    min-width:0;
`
const ListTable = styled.table`
    width:100%;
    border-collapse:separate;
    border-spacing:0;
    table-layout:fixed;
    background:#444;
    th {
        height:20px;
        padding:0 1px;
        border:1px solid #7d7d7d;
        text-align:left;
        font-weight:400;
        white-space:nowrap;
    }
    th:first-child { width:251px; }
    th > div { display:flex; justify-content:space-between; align-items:center; }
`
const ExplorerFoot = styled.div`
    height:28px;
    display:flex;
    align-items:center;
    padding:0 0 2px 3px;
    font-size:12px;
`
const WorkBox = styled.button`
    width:146px;
    height:23px;
    padding-left:1px;
    text-align:left;
    background:#4e4e4e;
    border:1px solid #666;
    color:#f3f300;
`
const More = styled.button`
    margin-left:auto;
    align-self:flex-start;
    padding-right:2px;
    font-size:12px;
    line-height:12px;
    color:#5858b0;
`

/* ---------- viewports ---------- */
const Center = styled.section`
    display:flex;
    flex-direction:column;
    padding-top:1px;
    min-width:0;
`
const ViewGrid = styled.div`
    flex:1;
    display:grid;
    grid-template-columns:1fr 1fr;
    grid-template-rows:1fr 1fr;
    gap:4px;
    margin-right:1px;
    min-height:0;
`
const View = styled.div<{ $active?: boolean }>`
    display:grid;
    min-width:0;
    min-height:0;
    border:2px solid ${p => p.$active ? '#7a6628' : '#303030'};
    background:${p => p.$active ? 'linear-gradient(#1b1b1b,#292929 30%,#4c4c4c)' : '#383838'};
    > * { grid-area:1/1; }
    > svg { width:100%; height:0; min-height:100%; }
`
const ViewLabel = styled.div`
    z-index:1;
    display:flex;
    gap:3px;
    align-self:start;
    justify-self:start;
    padding:3px;
    color:#dcdcdc;
`
const ViewTool = styled.button`
    height:16px;
    min-width:20px;
    text-align:left;
    white-space:pre;
    font-size:11px;
`
const GridLines = ({ cx }: { cx: number }) => {
    const lines: React.ReactNode[] = []
    for (let k = -20; k <= 20; k++) {
        if (k === 0) continue
        const color = Math.abs(k) % 10 === 0 ? '#505050' : '#666'
        const x = Math.round(cx + k * 9.27) + 0.5
        const y = Math.round(176 + k * 9.27) + 0.5
        lines.push(<path key={k} d={`M${x} 0 V353 M0 ${y} H370`} stroke={color} />)
    }
    return <g shapeRendering="crispEdges">{lines}<path d={`M${cx + .5} 0 V353 M0 176.5 H370`} stroke="#000" /></g>
}
const Axis = ({ lines, marks }: { lines: [string, string][]; marks: [string, number, number, string][] }) => (
    <g fontSize="10">
        {lines.map(([d, c]) => <path key={d} d={d} stroke={c} shapeRendering="crispEdges" fill="none" />)}
        {marks.map(([t, x, y, c]) => <text key={t} x={x} y={y} fill={c}>{t}</text>)}
    </g>
)
const R = '#c40c0c', G = '#0c960c', B = '#0c0ce0'
const FlatCube = ({ x, face }: { x: number; face: string }) => (
    <g>
        {face === 'TOP'
            ? <g fill="#b9bcc0" fontSize="11" fontWeight="700" textAnchor="middle">
                <circle cx={x + 15} cy="54" r="30" fill="none" stroke="#8d9197" strokeWidth="6" opacity=".85" />
                <circle cx={x + 15} cy="54" r="26" fill="none" stroke="#4a4f57" />
                <text x={x + 15} y="26">N</text><text x={x + 15} y="92">S</text><text x={x - 17} y="58">W</text><text x={x + 48} y="58">E</text>
            </g>
            : <g fill="none"><ellipse cx={x + 15} cy="71" rx="33" ry="2.500" stroke="#a9acb0" strokeWidth="1.400" /><path d={`M${x - 24} 70.5 H${x - 12} M${x + 42} 70.5 H${x + 54}`} stroke="#999" /></g>}
        <rect x={x} y="39" width="31" height="31" fill="#8f9191" stroke="#777" opacity=".94" />
        <rect x={x + 5} y="44" width="21" height="21" fill="none" stroke="#9c9e9e" />
        <text x={x + 15} y="57" fontSize="7" fontWeight="700" fill="#65686c" textAnchor="middle">{face}</text>
    </g>
)
// ground plane, u and v run from -7 to 7
const project = (u: number, v: number) => {
    const s = u + v, w = 1 - 0.02416 * s
    return `${(185 + 12.71 * (u - v) / w).toFixed(1)} ${((176.5 + 2.093 * s) / w).toFixed(1)}`
}
const Ground = () => {
    const steps = Array.from({ length: 15 }, (_, i) => i - 7)
    return (
        <g fill="none">
            {steps.filter(k => k !== 0).map(k => <path key={k} d={`M${project(k, -7)} L${project(k, 7)} M${project(-7, k)} L${project(7, k)}`} stroke="#717171" strokeWidth=".9" />)}
            <path d={`M${project(0, -7)} L${project(0, 7)} M${project(-7, 0)} L${project(7, 0)}`} stroke="#000" strokeWidth="1.300" />
        </g>
    )
}
const PerspCube = () => (
    <g fontWeight="700">
        <ellipse cx="316" cy="71" rx="31.500" ry="17" fill="#222" stroke="#7e8289" strokeWidth="6" />
        <ellipse cx="316" cy="70" rx="27" ry="13.500" fill="none" stroke="#555b66" />
        <g fontSize="11" fill="#b3b6ba" textAnchor="middle">
            <text transform="translate(289 87) rotate(25)">W</text><text transform="translate(343 87) rotate(-25)">S</text>
            <text fontSize="8" x="294" y="61">N</text><text fontSize="8" x="338" y="61">E</text>
        </g>
        <path d="M316 34 L337 44 L316 54 L296 44 Z" fill="#898b8c" />
        <path d="M296 44 L316 54 V77 L297 66 Z" fill="#a2a4a4" />
        <path d="M337 44 L316 54 V77 L335 66 Z" fill="#8f9191" />
        <g fontSize="6" fill="#606367" textAnchor="middle">
            <text x="316" y="44">TOP</text><text transform="translate(306 62) skewY(25)">LEFT</text><text transform="translate(327 63) skewY(-25)">FRONT</text>
        </g>
    </g>
)
const views = [
    { name: 'Top', mode: 'Wireframe', cx: 184, art: <><FlatCube x={300} face="TOP" /><Axis lines={[['M25.5 327 V304', G], ['M25 327.5 H50', R]]} marks={[['Y', 25, 302, G], ['x', 50, 325, R], ['z', 25, 325, B]]} /></> },
    { name: 'Front', mode: 'Wireframe', cx: 185, art: <><FlatCube x={301} face="FRONT" /><Axis lines={[['M24.5 327 V304', B], ['M24 327.5 H49', R]]} marks={[['z', 24, 301, B], ['x', 50, 325, R], ['y', 25, 325, G]]} /></> },
    { name: 'Left', mode: 'Wireframe', cx: 184, art: <><FlatCube x={300} face="LEFT" /><Axis lines={[['M24.5 327 V304', B], ['M24 326.5 H2', G]]} marks={[['z', 24, 300, B], ['y', 1, 325, G], ['x', 25, 325, R]]} /></> },
    { name: 'Perspective', mode: 'Realistic', cx: 0, art: <><Ground /><PerspCube /><Axis lines={[['M24.5 327 V306', B], ['M25 327 L43 319', R], ['M25 327 L9 319', G]]} marks={[['z', 24, 303, B], ['x', 43, 316, R], ['y', 8, 316, G]]} /></> },
]
const SliderRow = styled.div`
    height:17px;
    display:flex;
`
const SliderButton = styled.button<{ $w: number }>`
    width:${p => p.$w}px;
    height:17px;
    line-height:14px;
    ${raised}
    border-bottom-width:${p => p.$w > 20 ? 2 : 1}px;
    color:#d0d0d0;
`
const TrackRow = styled.div`
    height:26px;
    margin-top:2px;
    display:flex;
    border-top:1px solid #0c0c0c;
    border-bottom:1px solid #444;
`
const TrackIcon = styled.button`
    width:49px;
    padding:0 14px;
    border-right:1px solid #333;
`
const Ruler = styled.div`
    flex:1;
    max-width:655px;
    background:#272727;
    > svg { width:100%; height:24px; overflow:visible; }
`
const Track = () => (
    <Ruler>
        <svg viewBox="0 0 655 24" preserveAspectRatio="xMinYMin meet">
            <g shapeRendering="crispEdges">
                {Array.from({ length: 101 }, (_, i) => {
                    const x = Math.round(4 + i * 6.475) + 0.5
                    return <path key={i} d={`M${x} 0 V${i % 10 ? 11 : 24}`} stroke="#6c6c6c" />
                })}
            </g>
            <rect x="0" y="1" width="8" height="22" fill="#9a8018" fillOpacity=".85" />
            {Array.from({ length: 11 }, (_, i) => <text key={i} x={4 + i * 64.75} y="22" fontSize="11" fill={i ? '#c4c4c4' : '#e8e020'} textAnchor="middle">{i * 10}</text>)}
        </svg>
    </Ruler>
)

/* ---------- command panel ---------- */
const Command = styled.aside`
    display:flex;
    flex-direction:column;
    padding:2px 6px 6px 1px;
    border-left:1px solid #333;
`
const Tabs = styled.div`
    display:flex;
    border-bottom:1px solid #0c0c0c;
    margin-right:-6px;
`
const Tab = styled.button<{ $on?: boolean }>`
    width:29px;
    height:26px;
    display:grid;
    place-items:center;
    background:${p => p.$on ? '#444' : '#3a3a3a'};
    border:1px solid #0c0c0c;
    border-left-color:#555;
    border-bottom:0;
    border-radius:4px 4px 0 0;
`
const Categories = styled.div`
    display:flex;
    gap:2px;
    padding:8px 0 6px 10px;
`
const Category = styled.button<{ $on?: boolean }>`
    width:22px;
    height:22px;
    display:grid;
    place-items:center;
    ${p => p.$on && css`background:#3b83e0; border:1px solid #111;`}
`
const CategoryDrop = styled.div`
    padding:0 3px 7px 8px;
`
const Rollouts = styled.div`
    flex:1;
    margin-left:1px;
    padding:4px 4px 4px 6px;
    border-top:1px solid #0c0c0c;
    border-right:1px solid #393939;
    border-bottom:1px solid #393939;
`
const Rollout = styled.section`
    display:grid;
    grid-template-rows:8px 8px auto;
    grid-template-columns:3px 1fr 3px;
    margin-bottom:7px;
`
const RolloutTitle = styled.button`
    grid-area:1/2/3/3;
    z-index:1;
    height:16px;
    display:flex;
    align-items:center;
    padding:0 4px;
    background:#444;
    border:1px solid #666;
    color:#eee;
    > span { flex:1; padding-right:4px; }
`
const RolloutBody = styled.div`
    grid-area:2/1/4/4;
    padding:8px 7px 3px;
    border:1px solid #0c0c0c;
    border-top-color:#555;
`
const AutoGrid = styled.label`
    display:flex;
    align-items:center;
    gap:9px;
    height:18px;
    padding-left:26px;
    color:#151515;
`
const Check = styled.input`
    appearance:none;
    width:13px;
    height:13px;
    ${sunken}
    border-width:2px 1px 1px 2px;
`
const TypeGrid = styled.div`
    display:grid;
    grid-template-columns:69px 69px;
    gap:3px 9px;
    padding-top:1px;
`
const TypeButton = styled.button`
    height:18px;
    line-height:14px;
    color:#c4c4a8;
    ${raised}
`
const NameRow = styled.div`
    display:flex;
    gap:3px;
    margin-right:-3px;
    padding:6px 0 4px;
`
const Field = styled.input<{ $w?: number; $light?: boolean }>`
    ${p => p.$w ? `width:${p.$w}px; flex:none;` : 'flex:1; min-width:0;'}
    height:20px;
    padding:0 3px;
    background:#555;
    color:${p => p.$light ? '#ccc' : '#141414'};
    ${sunken}
    border-width:2px 1px 1px 2px;
`
const Swatch = styled.button`
    width:18px;
    height:20px;
    background:#c02c82;
    border:1px solid #111;
`

/* ---------- status bar ---------- */
const Status = styled.footer`
    height:50px;
    display:flex;
    background:#444;
    border-top:1px solid #0c0c0c;
`
const Listener = styled.div`
    width:101px;
    flex:none;
    display:grid;
    gap:2px;
    padding:1px;
`
const ListenerInput = styled.input<{ $pink?: boolean }>`
    width:99px;
    height:22px;
    padding:0 5px;
    border:1px solid #888;
    border-right:2px solid #fff;
    border-bottom:2px solid #fff;
    background:${p => p.$pink ? '#dcc2c4' : '#fff'};
    color:#111;
    font-family:"Liberation Mono",monospace;
    font-size:12px;
`
const Prompts = styled.div`
    flex:1;
    min-width:0;
    display:grid;
    grid-template-rows:21px 21px;
    gap:4px;
    padding:3px 0 0 2px;
    margin-left:3px;
    border-left:1px solid #0c0c0c;
`
const PromptRow = styled.div`
    display:flex;
    align-items:center;
`
const Prompt = styled.div<{ $w?: number }>`
    ${p => p.$w ? `width:${p.$w}px; flex:none;` : 'flex:1; min-width:0;'}
    height:21px;
    padding-left:4px;
    line-height:20px;
    white-space:nowrap;
    overflow:hidden;
    border:1px solid #393939;
    border-top-color:#0c0c0c;
    border-left-color:#0c0c0c;
`
const Coord = styled.label`
    display:flex;
    align-items:center;
    > span { width:13px; }
`
const KeyButton = styled.button`
    width:44px;
    height:43px;
    margin:3px 3px 0 3px;
    display:grid;
    place-items:center;
    ${raised}
`
const KeyCol = styled.div<{ $w: number }>`
    width:${p => p.$w}px;
    display:flex;
    flex-direction:column;
    gap:1px;
    padding-top:3px;
    margin-right:2px;
    flex:none;
`
const PushButton = styled.button`
    height:21px;
    white-space:nowrap;
    color:#c4c4b4;
    ${raised}
`
const FilterRow = styled.div`
    display:flex;
    gap:2px;
    margin-top:2px;
    height:21px;
    > :last-child { flex:1; }
`
const Transport = styled.div`
    display:grid;
    grid-template-rows:21px 21px;
    gap:2px;
    padding-top:2px;
    width:222px;
    flex:none;
`
const Spin = styled.div`
    display:grid;
    width:11px;
    margin-left:1px;
`
const SpinButton = styled.button`
    width:10px;
    height:9px;
    display:grid;
    place-items:center;
    border:1px solid #333;
`

const filters = ['sphere', 'shapes', 'light', 'camera', 'tape', 'wavesDark', 'group', 'xref', 'bone', 'container', 'frozen', 'hidden']
const types = ['Box', 'Cone', 'Sphere', 'GeoSphere', 'Cylinder', 'Tube', 'Torus', 'Pyramid', 'Teapot', 'Plane', 'TextPlus']

const App = () => {
    const [tab, setTab] = useState('create')
    const [category, setCategory] = useState('sphere')
    const [find, setFind] = useState('')

    return (
        <Window>
            <GlobalStyle />
            <Defs />
            <Header>
                <AppButton aria-label="Application menu">
                    <svg width="30" height="28" viewBox="0 0 30 28">
                        <path d="M7 4 H20 L25 14 L20 24 H8 L6 20 L14 15 L7 13 L13 10 Z" fill="url(#teal)" />
                        <path d="M7 4 L10 2 H20 L17 9 H8 Z M6 20 L8 24 H17 L20 26 L16 18 Z" fill="#19b0b3" />
                        <path d="M7 13 L15 8 V19 Z" fill="#35d0cc" />
                    </svg>
                    <Caret color="#222" />
                    <span>MAX</span>
                </AppButton>
                <TitleRow>
                    <QuickBar>
                        {['newFile', 'openFile', 'save'].map(n => <IconButton key={n} aria-label={n}><Small name={n} /></IconButton>)}
                        <IconButton $w={22} aria-label="Undo"><Small name="undoS" /></IconButton>
                        <IconButton $w={14} aria-label="Undo list"><Caret /></IconButton>
                        <IconButton $w={22} aria-label="Redo"><Small name="redoS" /></IconButton>
                        <IconButton $w={14} aria-label="Redo list"><Caret /></IconButton>
                        <IconButton aria-label="Project folder"><Small name="project" /></IconButton>
                        <DropWrap $w={130} $h={21}>
                            <WorkspaceSelect aria-label="Workspace" defaultValue="d"><option value="d">Workspace: Default</option></WorkspaceSelect>
                            <Caret />
                        </DropWrap>
                        <QuickEnd aria-label="Customize quick access"><svg width="9" height="7" viewBox="0 0 9 7"><path d="M0 .5 H9 M1 3 H8 L4.500 7 Z" stroke="#333" fill="#333" strokeWidth=".8" /></svg></QuickEnd>
                    </QuickBar>
                    <Title>Untitled</Title>
                    <HelpBar>
                        <IconButton $w={12} aria-label="Collapse"><svg width="5" height="8" viewBox="0 0 5 8"><path d="M0 0 L5 4 L0 8 Z" fill="#333" /></svg></IconButton>
                        <SearchInput aria-label="Search" placeholder="Type a keyword or phrase" />
                        <IconButton aria-label="Search help"><Small name="binoc" /></IconButton>
                        <IconButton aria-label="Communication"><Small name="dish" /></IconButton>
                        <IconButton aria-label="Favorites"><Small name="star" /></IconButton>
                        <IconButton aria-label="Account"><Small name="user" /></IconButton>
                        <SignIn>Sign In</SignIn>
                        <IconButton $w={10} aria-label="Account list"><Caret /></IconButton>
                        <IconButton $w={28} aria-label="Exchange"><Small name="exchange" /></IconButton>
                        <VLine $light $h={20} />
                        <IconButton $w={28} aria-label="Help"><Small name="help" /></IconButton>
                        <IconButton $w={10} aria-label="Help list"><Caret /></IconButton>
                    </HelpBar>
                    <WinButtons>
                        <WinButton aria-label="Minimize"><svg width="9" height="12" viewBox="0 0 9 12"><path d="M0 10.500 H9" stroke="#111" strokeWidth="2" /></svg></WinButton>
                        <WinButton aria-label="Maximize"><svg width="10" height="8" viewBox="0 0 10 8"><path d="M.5 1 H9.500 V7.500 H.5 Z" fill="none" stroke="#111" /><path d="M0 1 H10" stroke="#111" strokeWidth="2" /></svg></WinButton>
                        <WinButton $close aria-label="Close"><svg width="9" height="8" viewBox="0 0 9 8"><path d="M1 0 L8 8 M8 0 L1 8" stroke="#fff" strokeWidth="2" /></svg></WinButton>
                    </WinButtons>
                </TitleRow>
                <Menu>{menus.map(([t, w]) => <MenuButton key={t} $w={w}>{t}</MenuButton>)}</Menu>
            </Header>

            <Toolbar>
                <Handle />
                {toolRow.map((t, i) => {
                    if (t === '|') return <VLine key={i} />
                    if (t === 'All' || t === 'View') return <ToolDrop key={i}><Drop label={t === 'All' ? 'Selection filter' : 'Coordinate system'} value={t} h={20} /></ToolDrop>
                    if (t === '[]') return <NamedBox key={i}><NamedInput aria-label="Named selection set" /><IconButton $w={14} $h={18} aria-label="Selection sets"><Chevron /></IconButton></NamedBox>
                    const name = t.replace('*', '')
                    return <Tool key={i} $on={t.endsWith('*')} aria-label={name}><Big name={name} /></Tool>
                })}
            </Toolbar>

            <Ribbon>
                <Handle />
                <RibbonBody>
                    <RibbonTabs>
                        <RibbonTab $w={81} $on>Modeling</RibbonTab>
                        <RibbonTab $w={94}>Freeform</RibbonTab>
                        <RibbonTab $w={90}>Selection</RibbonTab>
                        <RibbonTab $w={112}>Object Paint</RibbonTab>
                        <RibbonTab $w={88}>Populate</RibbonTab>
                        <IconButton $w={46} $h={17} aria-label="Ribbon display">
                            <svg width="24" height="9" viewBox="0 0 24 9"><rect x=".5" y=".5" width="13" height="8" rx="2" fill="#e6e6e6" stroke="#fff" /><path d="M4 3 H10 L7 6 Z" fill="#222" /><path d="M19 3 H24 L21.500 6 Z" fill="#bbb" /></svg>
                        </IconButton>
                    </RibbonTabs>
                    <RibbonPanels><PanelButton>Polygon Modeling</PanelButton></RibbonPanels>
                </RibbonBody>
            </Ribbon>

            <Main>
                <LayoutStrip>
                    <StripArrow aria-label="Layouts"><svg width="6" height="9" viewBox="0 0 6 9"><path d="M0 0 L6 4.500 L0 9 Z" fill="#e6e6e6" /></svg></StripArrow>
                    <StripLayout aria-label="Four viewports">
                        <svg width="32" height="30" viewBox="0 0 32 30"><path d="M1 1 h14 v13 h-14 z M17 1 h14 v13 h-14 z M1 16 h14 v13 h-14 z M17 16 h14 v13 h-14 z" fill="#55657a" stroke="#22334f" strokeWidth="1.500" /></svg>
                    </StripLayout>
                </LayoutStrip>

                <Explorer>
                    <ExplorerMenu>
                        {([['Select', 50], ['Display', 57], ['Edit', 39], ['Customize', 70]] as [string, number][]).map(([t, w]) => <ExplorerMenuButton key={t} $w={w}>{t}</ExplorerMenuButton>)}
                    </ExplorerMenu>
                    <ExplorerTools>
                        <FindInput aria-label="Find" value={find} onChange={e => setFind(e.target.value)} />
                        <IconButton aria-label="Clear" onClick={() => setFind('')}><Small name="cross" /></IconButton>
                        <Lit $w={22} aria-label="Filter"><Small name="filterOn" /></Lit>
                        <VLine $light $h={22} />
                        <IconButton $w={23} aria-label="Lock"><Small name="lockGold" /></IconButton>
                        <IconButton $w={23} aria-label="Add to selection"><Small name="addSel" /></IconButton>
                        <IconButton $w={23} aria-label="Select children"><Small name="treeSel" /></IconButton>
                    </ExplorerTools>
                    <ExplorerBody>
                        <Filters>
                            {filters.map(n => <FilterLit key={n} aria-label={n}><Small name={n} /></FilterLit>)}
                            <hr />
                            {['docFull', 'docEmpty', 'docHalf'].map(n => <IconButton key={n} $w={20} aria-label={n}><Small name={n} /></IconButton>)}
                            <hr />
                            {['funnel', 'funnelSet', 'torn'].map(n => <IconButton key={n} $w={20} aria-label={n}><Small name={n} /></IconButton>)}
                        </Filters>
                        <ListArea>
                            <ListTable>
                                <thead>
                                    <tr>
                                        <th><div>Name (Sorted Ascending)<svg width="7" height="7" viewBox="0 0 7 7"><path d="M0 7 L3.500 0 L7 7 Z" fill="#ccc" /></svg></div></th>
                                        <th>Frozen</th>
                                    </tr>
                                </thead>
                            </ListTable>
                        </ListArea>
                    </ExplorerBody>
                    <ExplorerFoot>
                        <WorkBox>Workspace: Default</WorkBox>
                        <IconButton $w={14} aria-label="Workspace list"><Caret color="#0c0c0c" /></IconButton>
                        <VLine $light $w={5} $h={22} />
                        <IconButton $w={24} aria-label="Layer explorer"><Small name="stack" /></IconButton>
                        <Lit aria-label="Hierarchy explorer"><Small name="tree" /></Lit>
                        <VLine $light $w={10} $h={22} />
                        <span>Selection Set:</span>
                        <More aria-label="More">»</More>
                    </ExplorerFoot>
                </Explorer>

                <Center>
                    <ViewGrid>
                        {views.map(v => (
                            <View key={v.name} $active={v.name === 'Perspective'}>
                                <svg viewBox="0 0 370 353" preserveAspectRatio="xMidYMid slice">
                                    {v.cx > 0 && <GridLines cx={v.cx} />}
                                    {v.art}
                                </svg>
                                <ViewLabel>
                                    <ViewTool>[+]</ViewTool>
                                    <ViewTool>{`[${v.name} ]`}</ViewTool>
                                    <ViewTool>{`[${v.mode} ]`}</ViewTool>
                                </ViewLabel>
                            </View>
                        ))}
                    </ViewGrid>
                    <SliderRow>
                        <SliderButton $w={16}>&lt;</SliderButton>
                        <SliderButton $w={125}>0 / 100</SliderButton>
                        <SliderButton $w={15}>&gt;</SliderButton>
                    </SliderRow>
                    <TrackRow>
                        <TrackIcon aria-label="Open mini curve editor"><Small name="trackView" /></TrackIcon>
                        <Track />
                    </TrackRow>
                </Center>

                <Command>
                    <Tabs>
                        {Object.keys(tabArt).map(n => (
                            <Tab key={n} $on={tab === n} onClick={() => setTab(n)} aria-label={n}><svg width="24" height="24" viewBox="0 0 24 24">{tabArt[n]}</svg></Tab>
                        ))}
                    </Tabs>
                    <Categories>
                        {['sphere', 'shapes', 'light', 'camera', 'tape', 'wavesLight', 'system'].map(n => (
                            <Category key={n} $on={category === n} onClick={() => setCategory(n)} aria-label={n}><Small name={n} /></Category>
                        ))}
                    </Categories>
                    <CategoryDrop><Drop label="Category" value="Standard Primitives" h={21} /></CategoryDrop>
                    <Rollouts>
                        <Rollout>
                            <RolloutTitle>-<span>Object Type</span></RolloutTitle>
                            <RolloutBody>
                                <AutoGrid><Check type="checkbox" />AutoGrid</AutoGrid>
                                <TypeGrid>{types.map(t => <TypeButton key={t}>{t}</TypeButton>)}</TypeGrid>
                            </RolloutBody>
                        </Rollout>
                        <Rollout>
                            <RolloutTitle>-<span>Name and Color</span></RolloutTitle>
                            <RolloutBody>
                                <NameRow><Field aria-label="Object name" /><Swatch aria-label="Object color" /></NameRow>
                            </RolloutBody>
                        </Rollout>
                    </Rollouts>
                </Command>
            </Main>

            <Status>
                <Listener>
                    <ListenerInput $pink aria-label="Macro recorder" />
                    <ListenerInput aria-label="Script listener" defaultValue="Welcome to MAXScript." />
                </Listener>
                <Prompts>
                    <PromptRow>
                        <Prompt>None Selected</Prompt>
                        <IconButton $w={26} aria-label="Isolate"><Small name="bulb" /></IconButton>
                        <IconButton $w={26} aria-label="Selection lock"><Small name="lockGrey" /></IconButton>
                        <IconButton $w={28} aria-label="Absolute mode"><Small name="absMode" /></IconButton>
                        <Spacer $w={1} />
                        <Coord><span>X:</span><Field $w={58} defaultValue="104.018" /></Coord>
                        <Spacer $w={11} />
                        <Coord><span>Y:</span><Field $w={58} defaultValue="-57.397" /></Coord>
                        <Spacer $w={11} />
                        <Coord><span>Z:</span><Field $w={58} defaultValue="0.0" /></Coord>
                        <Spacer $w={15} />
                        <Prompt $w={100}>Grid = 10.0</Prompt>
                    </PromptRow>
                    <PromptRow>
                        <Prompt>Click or click-and-drag to select objects</Prompt>
                        <Spacer $w={4} />
                        <Lit $w={20} aria-label="Adaptive degradation"><Small name="isolate" /></Lit>
                        <Spacer $w={4} />
                        <Prompt $w={100}>Add Time Tag</Prompt>
                    </PromptRow>
                </Prompts>
                <KeyButton aria-label="Set keys">
                    <svg width="26" height="12" viewBox="0 0 26 12"><circle cx="6" cy="6" r="4" fill="none" stroke="#0c0c0c" strokeWidth="2" /><path d="M10 6 H25 M19 6 V10 M23 6 V11" stroke="#0c0c0c" strokeWidth="2.500" /></svg>
                </KeyButton>
                <KeyCol $w={49}>
                    <PushButton>Auto Key</PushButton>
                    <PushButton>Set Key</PushButton>
                </KeyCol>
                <KeyCol $w={117}>
                    <Drop label="Key selection" value="Selected" h={20} />
                    <FilterRow>
                        <IconButton $w={24} aria-label="Default tangents"><Small name="curveKey" /></IconButton>
                        <PushButton>Key Filters...</PushButton>
                    </FilterRow>
                </KeyCol>
                <Transport>
                    <PromptRow>
                        <IconButton $w={24} aria-label="Go to start"><Small name="toStart" /></IconButton>
                        <VLine $w={3} />
                        {['prev', 'play', 'next'].map(n => <IconButton key={n} $w={23} aria-label={n}><Small name={n} /></IconButton>)}
                        <VLine $w={3} />
                        <IconButton $w={24} aria-label="Go to end"><Small name="toEnd" /></IconButton>
                        {['zoom', 'zoomAll', 'extents', 'extentsAll'].map(n => <IconButton key={n} $w={23} aria-label={n}><Small name={n} /></IconButton>)}
                    </PromptRow>
                    <PromptRow>
                        <IconButton $w={24} aria-label="Key mode"><Small name="keyMode" /></IconButton>
                        <VLine $w={3} />
                        <Field $light $w={63} aria-label="Current frame" defaultValue="0" />
                        <Spin>
                            <SpinButton aria-label="Next frame"><svg width="6" height="3" viewBox="0 0 6 3"><path d="M0 3 L3 0 L6 3 Z" fill="#ccc" /></svg></SpinButton>
                            <SpinButton aria-label="Previous frame"><svg width="6" height="3" viewBox="0 0 6 3"><path d="M0 0 L3 3 L6 0 Z" fill="#ccc" /></svg></SpinButton>
                        </Spin>
                        <VLine $w={3} />
                        <IconButton $w={21} aria-label="Time configuration"><Small name="timeConf" /></IconButton>
                        {['fov', 'pan', 'orbit', 'maximize'].map(n => <IconButton key={n} $w={23} aria-label={n}><Small name={n} /></IconButton>)}
                    </PromptRow>
                </Transport>
            </Status>
        </Window>
    );
};

export default App;
